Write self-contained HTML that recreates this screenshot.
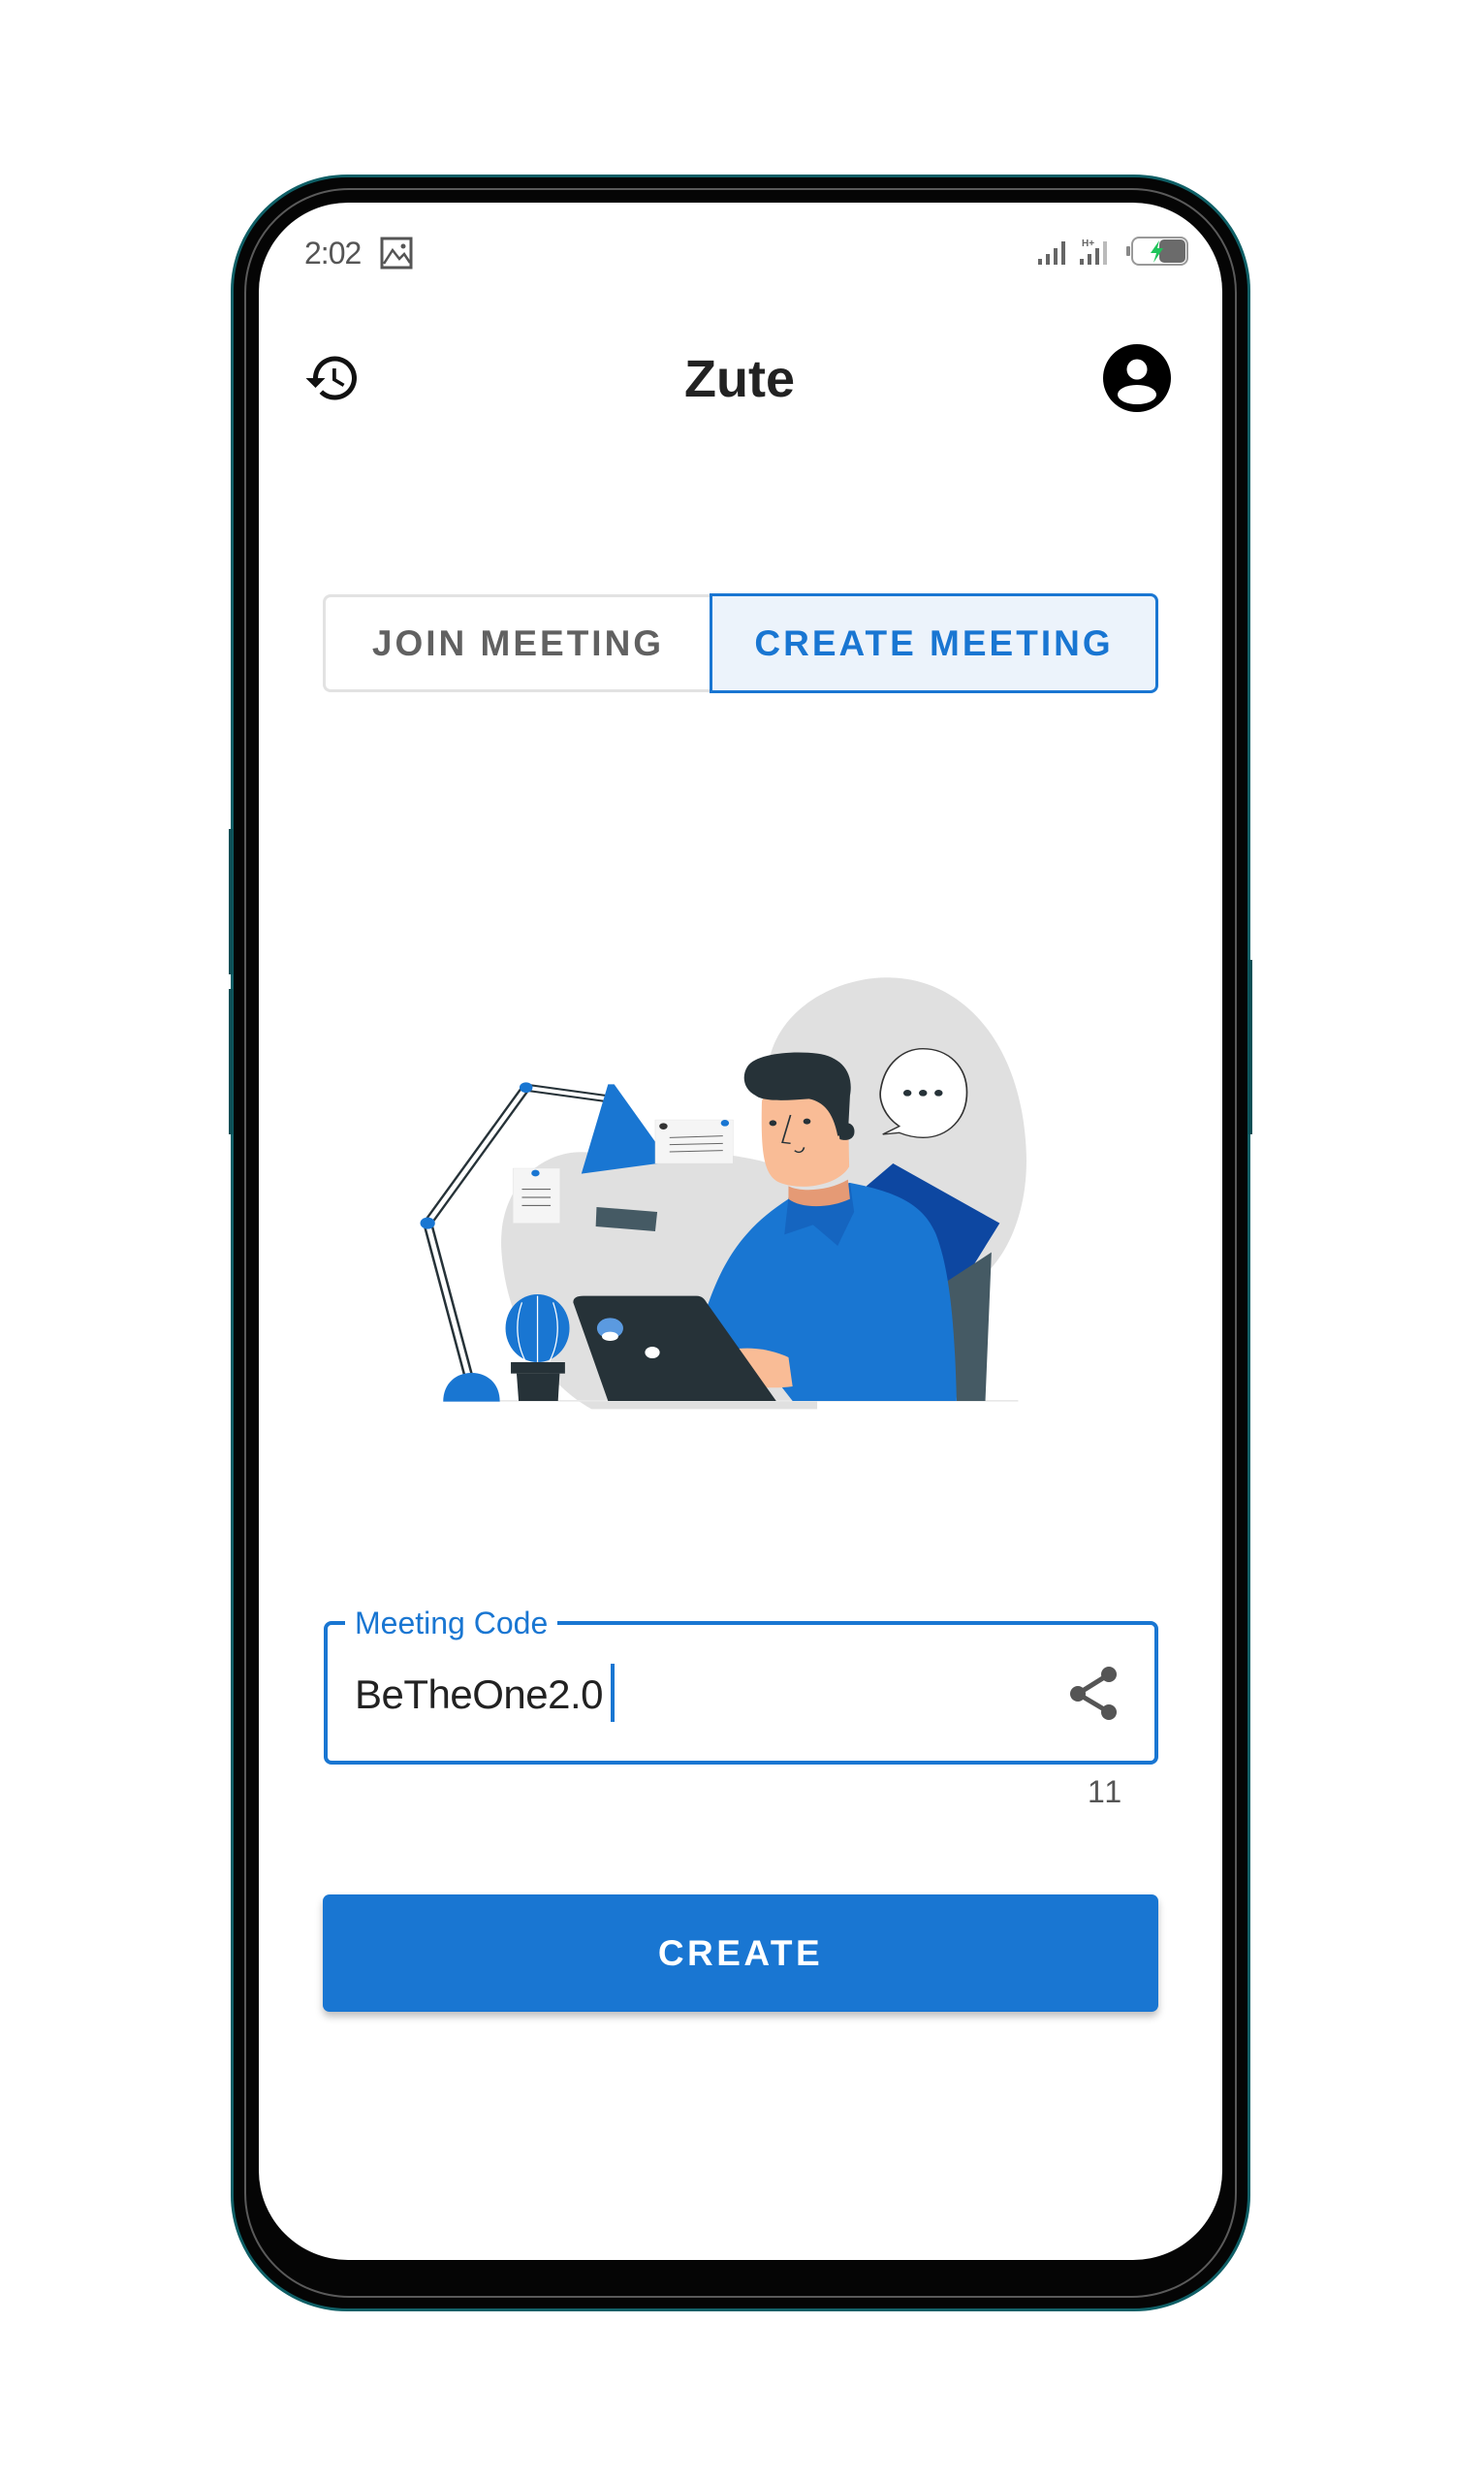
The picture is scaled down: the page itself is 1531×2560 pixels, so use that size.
<!DOCTYPE html>
<html><head><meta charset="utf-8"><style>
html,body{margin:0;padding:0;background:#fff;}
body{width:1531px;height:2560px;position:relative;overflow:hidden;font-family:"Liberation Sans",Roboto,sans-serif;}
.abs{position:absolute;}
.rim{left:238px;top:180px;width:1052px;height:2204px;border-radius:120px;background:#0f5f66;}
.bez{left:241px;top:183px;width:1046px;height:2198px;border-radius:117px;background:#050505;}
.hl{left:252px;top:194px;width:1024px;height:2176px;border-radius:108px;border:2px solid #5a5a5a;box-sizing:border-box;}
.screen{left:267px;top:209px;width:994px;height:2122px;border-radius:92px;background:#fff;overflow:hidden;}
</style></head><body>
<div class="abs rim"></div>
<div class="abs bez"></div>
<div class="abs hl"></div>
<div class="abs" style="left:236px;top:855px;width:4px;height:150px;background:#0c4f56"></div>
<div class="abs" style="left:236px;top:1020px;width:4px;height:150px;background:#0c4f56"></div>
<div class="abs" style="left:1288px;top:990px;width:4px;height:180px;background:#0c4f56"></div>
<div class="abs screen"></div>

<!-- status bar -->
<div class="abs" style="left:314px;top:243px;font-size:32px;color:#555;letter-spacing:-1px">2:02</div>
<svg class="abs" style="left:392px;top:244px" width="36" height="34" viewBox="0 0 36 34"><rect x="2" y="2" width="30" height="30" fill="none" stroke="#555" stroke-width="3"/><path d="M4 28 L13 14 L20 23 L25 18 L31 27" fill="none" stroke="#555" stroke-width="2.5"/><circle cx="24" cy="10" r="2.5" fill="#555"/></svg>
<svg class="abs" style="left:1068px;top:244px" width="90" height="32" viewBox="0 0 90 32">
<g fill="#666"><rect x="3" y="23" width="4" height="6"/><rect x="11" y="18" width="4" height="11"/><rect x="19" y="12" width="4" height="17"/><rect x="27" y="5" width="4" height="24"/>
<rect x="46" y="23" width="4" height="6"/><rect x="54" y="18" width="4" height="11"/><rect x="62" y="12" width="4" height="17"/><rect x="70" y="5" width="4" height="24" fill="#bbb"/>
<text x="48" y="10" font-size="10" font-weight="bold" font-family="Liberation Sans">H+</text></g></svg>
<svg class="abs" style="left:1162px;top:243px" width="66" height="32" viewBox="0 0 66 32"><rect x="0" y="11" width="4" height="10" rx="1" fill="#888"/><rect x="6" y="2" width="57" height="28" rx="7" fill="#fff" stroke="#999" stroke-width="2"/><rect x="34" y="4" width="27" height="24" rx="5" fill="#6b6b6b"/><path d="M34 5 L25 18 L31 18 L28 28 L38 13 L32 13 Z" fill="#1fc45a"/></svg>

<!-- header -->
<svg class="abs" style="left:313px;top:360px" width="60" height="60" viewBox="0 0 24 24"><path fill="#111" d="M13 3a9 9 0 0 0-9 9H1l3.89 3.890.07.14L9 12H6c0-3.87 3.13-7 7-7s7 3.13 7 7-3.13 7-7 7c-1.93 0-3.68-.79-4.94-2.06l-1.42 1.42A8.954 8.954 0 0 0 13 21a9 9 0 0 0 0-18zm-1 5v5l4.28 2.54.72-1.21-3.5-2.08V8H12z"/></svg>
<div class="abs" style="left:663px;top:360px;width:200px;text-align:center;font-size:54px;font-weight:bold;color:#222">Zute</div>
<svg class="abs" style="left:1138px;top:355px" width="70" height="70" viewBox="0 0 70 70"><circle cx="35" cy="35" r="35" fill="#000"/><circle cx="35" cy="26" r="10.5" fill="#fff"/><ellipse cx="35" cy="52" rx="20" ry="10" fill="#fff"/></svg>

<!-- tabs -->
<div class="abs" style="left:333px;top:613px;width:400px;height:101px;border:3px solid #e2e2e2;border-right:none;border-radius:8px 0 0 8px;box-sizing:border-box;display:flex;align-items:center;justify-content:center;font-size:37px;font-weight:bold;letter-spacing:3px;color:#616161">JOIN MEETING</div>
<div class="abs" style="left:732px;top:612px;width:463px;height:103px;border:3px solid #1976d2;border-radius:0 8px 8px 0;background:#ecf3fb;box-sizing:border-box;display:flex;align-items:center;justify-content:center;font-size:37px;font-weight:bold;letter-spacing:3px;color:#1976d2">CREATE MEETING</div>

<!-- illustration -->
<svg class="abs" style="left:420px;top:990px" width="660" height="480" viewBox="0 0 1560 1440" preserveAspectRatio="none">
<path d="M880 330 C900 150 1050 50 1180 55 C1350 60 1500 250 1510 600 C1515 800 1450 950 1380 1000 L900 1000 Z" fill="#e0e0e0"/>
<path d="M230 900 C220 700 330 590 430 595 C600 600 850 560 1000 700 L1000 1390 L450 1390 C320 1300 240 1100 230 900 Z" fill="#e0e0e0"/>
<rect x="90" y="1362" width="1400" height="5" fill="#e8e8e8"/>
<path d="M50 815 L290 395 L490 430" fill="none" stroke="#263238" stroke-width="24"/><path d="M50 815 L290 395 L490 430" fill="none" stroke="#fff" stroke-width="12"/>
<path d="M50 815 L150 1290" fill="none" stroke="#263238" stroke-width="24"/><path d="M50 815 L150 1290" fill="none" stroke="#fff" stroke-width="12"/>
<circle cx="290" cy="395" r="16" fill="#1976d2"/><circle cx="50" cy="815" r="18" fill="#1976d2"/>
<path d="M490 385 L505 385 L640 625 L425 662 Z" fill="#1976d2"/>
<path d="M88 1367 C88 1310 120 1278 157 1278 C195 1278 226 1310 226 1367 Z" fill="#1976d2"/>
<rect x="258" y="645" width="115" height="170" fill="#f5f5f5" stroke="#ddd"/><g stroke="#555" stroke-width="3"><line x1="280" y1="710" x2="350" y2="710"/><line x1="280" y1="735" x2="350" y2="735"/><line x1="280" y1="760" x2="350" y2="760"/></g><circle cx="313" cy="660" r="10" fill="#1976d2"/>
<rect x="605" y="495" width="190" height="135" fill="#f5f5f5" stroke="#ddd"/><g stroke="#666" stroke-width="3"><line x1="640" y1="550" x2="770" y2="545"/><line x1="640" y1="572" x2="770" y2="568"/><line x1="640" y1="594" x2="770" y2="590"/></g><circle cx="625" cy="515" r="10" fill="#333"/><circle cx="775" cy="505" r="10" fill="#1976d2"/>
<path d="M462 765 L610 780 L605 840 L460 825 Z" fill="#455a64"/>
<ellipse cx="318" cy="1140" rx="78" ry="105" fill="#1976d2"/><path d="M318 1040 L318 1245 M280 1060 C260 1130 270 1200 290 1245 M356 1060 C376 1130 366 1200 346 1245" stroke="#fff" stroke-width="3" fill="none"/>
<rect x="253" y="1245" width="132" height="35" fill="#263238"/><path d="M267 1280 L372 1280 L368 1365 L272 1365 Z" fill="#263238"/>
<path d="M1120 700 L1185 630 L1445 815 L1310 1090 Z" fill="#0d47a1"/>
<path d="M1310 1000 L1425 905 L1410 1365 L1340 1365 Z" fill="#455a64"/>
<path d="M730 1080 C770 930 820 830 930 740 L1080 690 C1200 720 1260 760 1290 850 C1320 950 1335 1100 1340 1365 L940 1365 L900 1300 L780 1240 Z" fill="#1976d2"/>
<path d="M930 735 L1080 690 L1090 780 L1050 885 L990 820 L920 850 Z" fill="#1565c0"/>
<path d="M780 1210 C820 1195 880 1200 930 1230 L940 1320 C880 1330 820 1320 790 1300 Z" fill="#f9bc96"/>
<path d="M865 440 C870 380 1000 380 1075 430 L1078 640 C1050 700 960 715 910 690 C870 670 862 600 865 440 Z" fill="#f9bc96"/>
<path d="M930 700 C960 720 1030 715 1075 680 L1080 740 C1030 770 960 770 930 740 Z" fill="#e59a75"/>
<path d="M830 330 C850 290 940 280 1000 290 C1060 300 1090 350 1080 420 L1075 540 L1050 545 C1040 480 1020 440 980 430 C930 435 870 440 850 420 C820 400 815 360 830 330 Z" fill="#263238"/>
<path d="M1050 510 C1075 495 1095 510 1090 540 C1085 560 1065 560 1055 555 Z" fill="#263238"/>
<circle cx="892" cy="505" r="9" fill="#263238"/><circle cx="975" cy="500" r="9" fill="#263238"/>
<path d="M935 480 L915 565 L935 568 M945 590 C955 600 965 595 968 580" stroke="#263238" stroke-width="4" fill="none"/>
<path d="M405 1060 C405 1045 415 1040 430 1040 L705 1040 C720 1040 725 1050 730 1060 L900 1365 L490 1365 Z" fill="#263238"/>
<circle cx="495" cy="1140" r="32" fill="#5b9ae0"/><ellipse cx="495" cy="1165" rx="20" ry="14" fill="#fff"/><circle cx="598" cy="1215" r="18" fill="#fff"/>
<path d="M1160 540 L1200 515 C1160 480 1150 430 1155 400 C1165 320 1210 275 1258 275 C1320 275 1365 330 1365 410 C1365 490 1320 550 1258 550 C1230 550 1210 540 1200 535 Z" fill="#fff" stroke="#333" stroke-width="4"/>
<circle cx="1220" cy="412" r="10" fill="#263238"/><circle cx="1258" cy="412" r="10" fill="#263238"/><circle cx="1296" cy="412" r="10" fill="#263238"/>
</svg>

<!-- text field -->
<div class="abs" style="left:334px;top:1672px;width:861px;height:148px;border:4px solid #1976d2;border-radius:8px;box-sizing:border-box"></div>
<div class="abs" style="left:356px;top:1652px;padding:0 10px;background:#fff;font-size:32px;color:#1976d2;line-height:44px">Meeting Code</div>
<div class="abs" style="left:366px;top:1722px;font-size:42px;color:#222;line-height:52px;letter-spacing:-0.5px">BeTheOne2.0</div>
<div class="abs" style="left:630px;top:1716px;width:4px;height:60px;background:#1976d2"></div>
<svg class="abs" style="left:1100px;top:1716px" width="56" height="60" viewBox="0 0 56 60"><g fill="#555"><circle cx="44" cy="11" r="8"/><circle cx="12" cy="31" r="8"/><circle cx="44" cy="50" r="8"/></g><path d="M44 11 L12 31 L44 50" stroke="#555" stroke-width="5" fill="none"/></svg>
<div class="abs" style="left:1122px;top:1830px;font-size:32px;color:#555;letter-spacing:2px">11</div>

<!-- button -->
<div class="abs" style="left:333px;top:1954px;width:862px;height:121px;background:#1976d2;border-radius:7px;box-shadow:0 5px 8px rgba(0,0,0,0.25);display:flex;align-items:center;justify-content:center;font-size:37px;font-weight:bold;letter-spacing:3.5px;color:#fff">CREATE</div>
</body></html>
